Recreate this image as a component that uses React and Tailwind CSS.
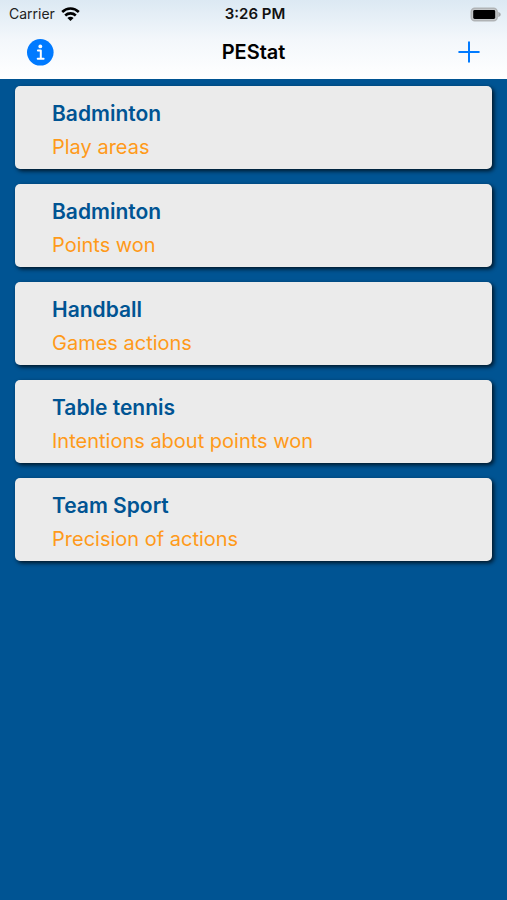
const activities = [
  { sport: "Badminton", topic: "Play areas" },
  { sport: "Badminton", topic: "Points won" },
  { sport: "Handball", topic: "Games actions" },
  { sport: "Table tennis", topic: "Intentions about points won" },
  { sport: "Team Sport", topic: "Precision of actions" },
];

function WifiIcon() {
  return (
    <svg className="h-[14px] w-[19px]" viewBox="0 0 19 14" aria-hidden="true">
      <g fill="none" stroke="#000" strokeWidth="2.6">
        <path d="M1.2 5C5.9 .4 13.1 .4 17.8 5" />
        <path d="M4.2 8.5C7.2 5.7 11.8 5.7 14.8 8.5" />
      </g>
      <path fill="#000" d="M9.5 14 6.4 10.9C8.1 9.3 10.9 9.3 12.6 10.9Z" />
    </svg>
  );
}

function BatteryIcon() {
  return (
    <svg className="h-[15px] w-[31px]" viewBox="0 0 31 15" aria-hidden="true">
      <rect x="1.2" y="1.2" width="26" height="12.6" rx="3.6" fill="#c4c7c9" stroke="#b0b3b5" strokeWidth="1.4" />
      <rect x="3.2" y="3" width="22" height="9" rx="1.4" fill="#000" />
      <path fill="#a6a9ab" d="M28.3 4.8C31.5 6.4 31.5 8.6 28.3 10.2Z" />
    </svg>
  );
}

function InfoIcon() {
  return (
    <svg className="size-[27px]" viewBox="0 0 27 27" aria-hidden="true">
      <circle cx="13.3" cy="13.3" r="13.3" fill="#007aff" />
      <circle cx="13.3" cy="7.4" r="1.9" fill="#fff" />
      <path fill="none" stroke="#fff" strokeWidth="2" strokeLinecap="round" strokeLinejoin="round" d="M10.9 11.5H13.8V19.6M10.7 19.8H16.6" />
    </svg>
  );
}

function PlusIcon() {
  return (
    <svg className="size-[22px]" viewBox="0 0 22 22" aria-hidden="true">
      <path fill="none" stroke="#007aff" strokeWidth="2" strokeLinecap="round" d="M11 1.2V20.8M1.2 11H20.8" />
    </svg>
  );
}

export default function App() {
  return (
    <div className="min-h-screen bg-[#005493] font-['Inter','Liberation_Sans',sans-serif]">
      <header className="bg-linear-to-b from-[#dce9f3] via-[#f3f7fb] to-white pb-[7px]">
        <div className="grid h-7 grid-cols-3 items-center pr-[6px] pl-[9px] text-sm">
          <div className="flex items-center gap-[6px] text-[#222]">
            <span>Carrier</span>
            <WifiIcon />
          </div>
          <time className="text-center text-[15px] font-semibold text-[#111]">3:26 PM</time>
          <div className="flex justify-end">
            <BatteryIcon />
          </div>
        </div>
        <nav className="grid h-11 grid-cols-3 items-center px-[27px] pt-1">
          <button type="button" aria-label="Information" className="justify-self-start">
            <InfoIcon />
          </button>
          <h1 className="text-center text-xl font-semibold">PEStat</h1>
          <button type="button" aria-label="Add" className="justify-self-end">
            <PlusIcon />
          </button>
        </nav>
      </header>
      <main className="px-[15px] pt-[7px] pb-4">
        <ul className="flex flex-col gap-[15px]">
          {activities.map(({ sport, topic }) => (
            <li key={sport + topic}>
              <button
                type="button"
                className="flex h-[83px] w-full flex-col items-start rounded-[5px] bg-[#ebebeb] px-[37px] pt-[14px] text-left shadow-[2px_2px_4px_rgba(0,0,0,0.75)]"
              >
                <span className="text-[21px] leading-7 font-semibold text-[#005493]">{sport}</span>
                <span className="mt-[5px] text-xl leading-7 text-[#ff9a1a]">{topic}</span>
              </button>
            </li>
          ))}
        </ul>
      </main>
    </div>
  );
}
